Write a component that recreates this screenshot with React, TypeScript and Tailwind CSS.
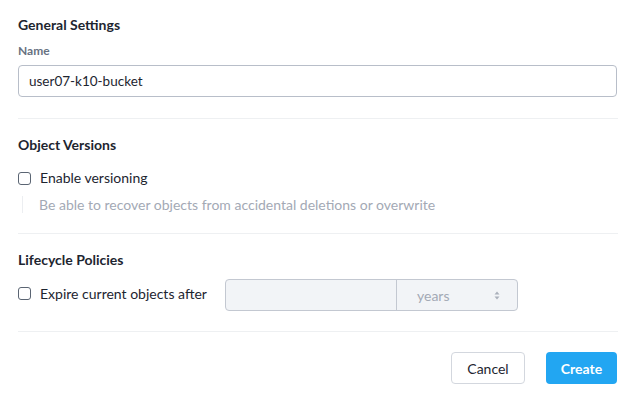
import React from "react";

function Checkbox() {
  return <span className="inline-block w-[13px] h-[13px] rounded-[3px] border-[1.5px] border-[#5b6573] bg-white shrink-0" />;
}

export default function App() {
  return (
    <div className="w-[633px] h-[401px] bg-white text-[#1d2530] px-[18px] pt-[16px]" style={{ fontFamily: "Lato, 'Open Sans', sans-serif" }}>
      <div className="text-[14px] font-bold leading-[17px]">General Settings</div>
      <div className="mt-[11px] text-[12px] font-bold text-[#687282] leading-[14px]">Name</div>
      <div className="mt-[7px] h-[32px] w-[599px] border border-[#b8bec9] rounded-[4px] flex items-center px-[10px] text-[13.5px]">user07-k10-bucket</div>
      <div className="mt-[21px] h-px bg-[#eef0f2] w-[600px]" />
      <div className="mt-[17px] text-[14px] font-bold leading-[17px]">Object Versions</div>
      <div className="mt-[16px] flex items-center gap-[9px] text-[14px] leading-[18px]">
        <Checkbox />
        <span>Enable versioning</span>
      </div>
      <div className="mt-[9px] ml-[4px] border-l border-[#eceef1] pl-[16px] text-[14px] text-[#a3a9b5] leading-[17px]">Be able to recover objects from accidental deletions or overwrite</div>
      <div className="mt-[20px] h-px bg-[#eef0f2] w-[600px]" />
      <div className="mt-[17px] text-[14px] font-bold leading-[17px]">Lifecycle Policies</div>
      <div className="mt-[11px] flex items-center">
        <div className="flex items-center gap-[9px] text-[14px] w-[207px] self-start pt-[4px]">
          <Checkbox />
          <span>Expire current objects after</span>
        </div>
        <div className="flex h-[32px] w-[293px] border border-[#c3c8d1] rounded-[4px] bg-[#f2f4f7]">
          <div className="w-[171px] border-r border-[#c3c8d1]" />
          <div className="flex-1 flex items-center justify-between pl-[20px] pr-[17px] text-[14px] text-[#a3a9b5]">
            <span>years</span>
            <svg width="6" height="9" viewBox="0 0 6 9"><path d="M3 0.5L5.5 3.5H0.5Z" fill="#aab0bb" /><path d="M3 8.5L5.5 5.5H0.5Z" fill="#aab0bb" /></svg>
          </div>
        </div>
      </div>
      <div className="mt-[20px] h-px bg-[#eef0f2] w-[600px]" />
      <div className="mt-[20px] flex justify-end gap-[21px] w-[599px]">
        <button className="h-[32px] w-[74px] border border-[#d3d7de] rounded-[4px] bg-white text-[14px] text-[#1d2530]">Cancel</button>
        <button className="h-[32px] w-[71px] rounded-[4px] bg-[#22a6f2] text-white text-[14px] font-bold">Create</button>
      </div>
    </div>
  );
}
